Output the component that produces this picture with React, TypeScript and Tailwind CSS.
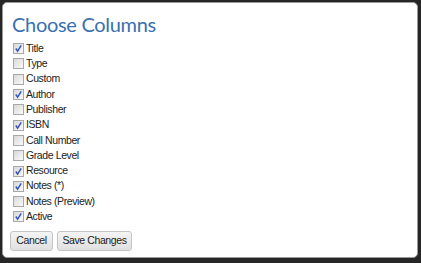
import React from "react";

const items: [string, boolean][] = [
  ["Title", true],
  ["Type", false],
  ["Custom", false],
  ["Author", true],
  ["Publisher", false],
  ["ISBN", true],
  ["Call Number", false],
  ["Grade Level", false],
  ["Resource", true],
  ["Notes (*)", true],
  ["Notes (Preview)", false],
  ["Active", true],
];

function Box({ checked }: { checked: boolean }) {
  return (
    <span className="w-[11px] h-[11px] border border-[#a8a8a8] bg-gradient-to-br from-[#d8d8d8] to-[#fafafa] shrink-0 flex items-center justify-center">
      {checked && (
        <svg width="9" height="9" viewBox="0 0 10 10">
          <path d="M2 5 L4 8 L8 1.5" fill="none" stroke="#3454b8" strokeWidth="1.6" />
        </svg>
      )}
    </span>
  );
}

export default function App() {
  return (
    <div className="w-[421px] h-[263px] bg-[#262626] overflow-hidden pt-[2px] pl-[2px]">
      <div className="w-[416px] h-[256px] bg-white rounded-[5px] border border-[#9a9a9a] pl-[7px] pt-[7px] flex flex-col">
        <h1 className="text-[20px] leading-[28px] tracking-[-0.3px] text-[#3a70b0] font-['Lato',sans-serif] ml-[2px]">Choose Columns</h1>
        <div className="flex flex-col mt-[3px] font-['Liberation_Sans',Arial,sans-serif] text-[10.5px] tracking-[-0.4px] text-[#222]">
          {items.map(([label, c]) => (
            <label key={label} className="flex items-center h-[15.3px] gap-[2px] pl-[3px]">
              <Box checked={c} />
              <span>{label}</span>
            </label>
          ))}
        </div>
        <div className="flex gap-[4px] mt-[6px] font-['Liberation_Sans',Arial,sans-serif] text-[10.5px] tracking-[-0.4px] text-[#222]">
          <button className="h-[20px] w-[43px] rounded-[3px] border border-[#c4c4c4] bg-gradient-to-b from-[#f4f4f4] to-[#e0e0e0]">Cancel</button>
          <button className="h-[20px] w-[75px] rounded-[3px] border border-[#c4c4c4] bg-gradient-to-b from-[#f4f4f4] to-[#e0e0e0]">Save Changes</button>
        </div>
      </div>
    </div>
  );
}
